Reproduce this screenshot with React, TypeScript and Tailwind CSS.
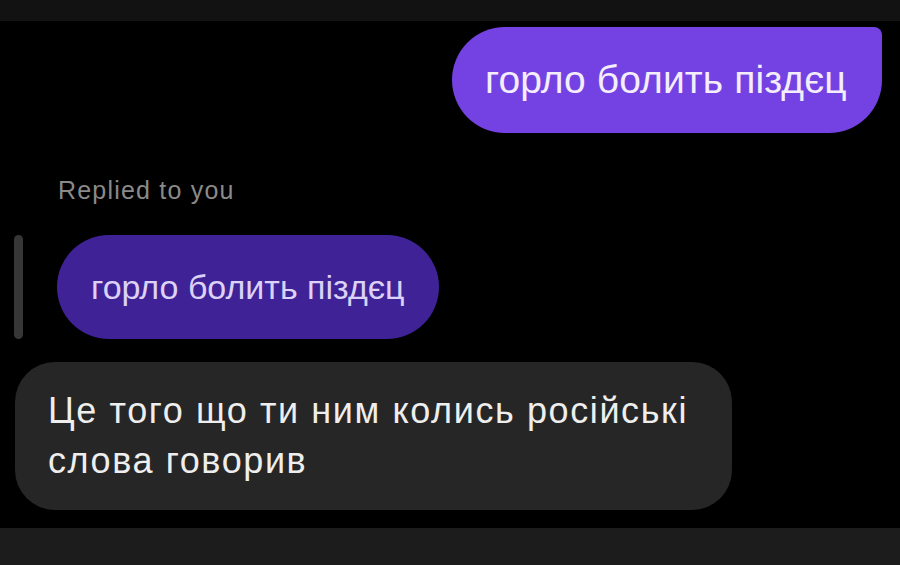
export default function App() {
  return (
    <div className="w-[900px] h-[565px] bg-black flex flex-col overflow-hidden font-['Liberation_Sans',Arial,sans-serif]">
      <div className="h-[21px] bg-[#121212] shrink-0" />
      <div className="flex-1 flex flex-col">
        <div className="flex justify-end pr-[18px] pt-[6px]">
          <div className="h-[106px] w-[430px] bg-[#7442e2] rounded-[53px] rounded-tr-[8px] flex items-center pl-[33px] text-[39px] tracking-[0.1px] text-[#f4eefc]">
            горло болить піздєц
          </div>
        </div>
        <div className="pl-[58px] mt-[42px] text-[25px] tracking-[1.2px] text-[#8a8a8a] leading-[30px]">Replied to you</div>
        <div className="flex items-stretch mt-[30px] pl-[14px] gap-[34px]">
          <div className="w-[9px] rounded-full bg-[#363636]" />
          <div className="h-[104px] w-[382px] bg-[#3f2396] rounded-[52px] flex items-center pl-[34px] text-[34px] text-[#dcd2f7]">
            горло болить піздєц
          </div>
        </div>
        <div className="pl-[15px] mt-[23px]">
          <div className="w-[717px] h-[148px] bg-[#262626] rounded-[40px] pl-[33px] flex flex-col justify-center text-[36px] tracking-[1.6px] leading-[50px] text-[#eeeeee]">
            <span>Це того що ти ним колись російські</span>
            <span>слова говорив</span>
          </div>
        </div>
      </div>
      <div className="h-[37px] bg-[#1c1c1c] shrink-0" />
    </div>
  );
}
